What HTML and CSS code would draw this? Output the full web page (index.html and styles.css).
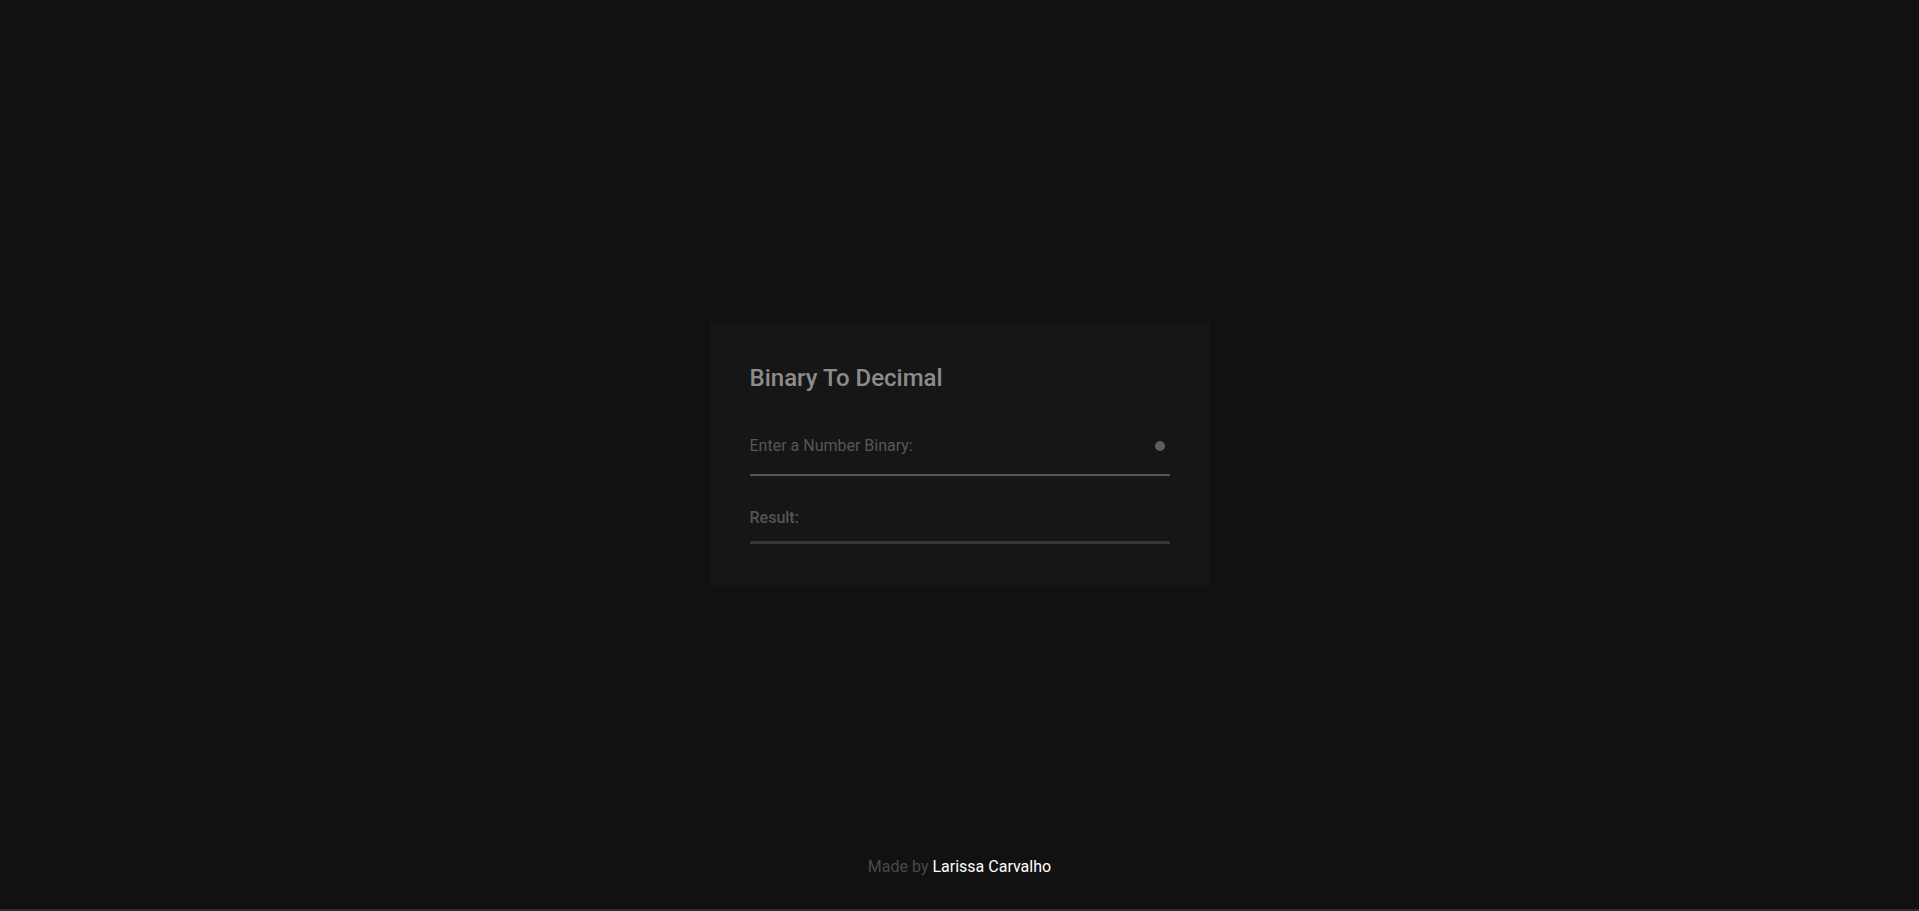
FILE: index.html
```html
<!DOCTYPE html>
<html lang="en">
<head>
<meta charset="utf-8">
<title>Binary To Decimal</title>
<link rel="stylesheet" href="styles.css">
</head>
<body>
<main class="page">
  <section class="card">
    <h1 class="title">Binary To Decimal</h1>
    <div class="field">
      <input class="input" type="text" placeholder="Enter a Number Binary:">
      <span class="dot"></span>
    </div>
    <div class="result">Result:</div>
  </section>
</main>
<footer class="footer">Made by <a class="author" href="#">Larissa Carvalho</a></footer>
</body>
</html>
```
FILE: styles.css
```css
* { box-sizing: border-box; }
html, body { margin: 0; height: 100%; }
body {
  background: #111111;
  font-family: Roboto, "Liberation Sans", sans-serif;
  display: flex;
  flex-direction: column;
  border-bottom: 2px solid #2c2c2c;
}
.page {
  flex: 1;
  display: flex;
  justify-content: center;
  padding-top: 323px;
}
.card {
  width: 500px;
  height: 262px;
  background: #161616;
  padding: 41px 40px 0;
}
.title {
  margin: 0;
  font-size: 24px;
  font-weight: 500;
  color: #8c8c8c;
  line-height: 28px;
}
.field {
  position: relative;
  margin-top: 42px;
  border-bottom: 2px solid #555555;
}
.input {
  display: block;
  width: 100%;
  background: transparent;
  border: 0;
  outline: none;
  padding: 0 0 16px;
  font-family: inherit;
  font-size: 16px;
  line-height: 24px;
  color: #777;
}
.input::placeholder { color: #565656; }
.dot {
  position: absolute;
  right: 5px;
  top: 7px;
  width: 10px;
  height: 10px;
  border-radius: 50%;
  background: #5e5e5e;
}
.result {
  margin-top: 30px;
  font-size: 16px;
  font-weight: 500;
  color: #555555;
  line-height: 24px;
  padding-bottom: 11px;
  border-bottom: 3px solid #353535;
}
.footer {
  text-align: center;
  font-size: 16px;
  color: #4a4a4a;
  line-height: 20px;
  padding-bottom: 32px;
}
.author {
  color: #ffffff;
  text-decoration: none;
}
```
